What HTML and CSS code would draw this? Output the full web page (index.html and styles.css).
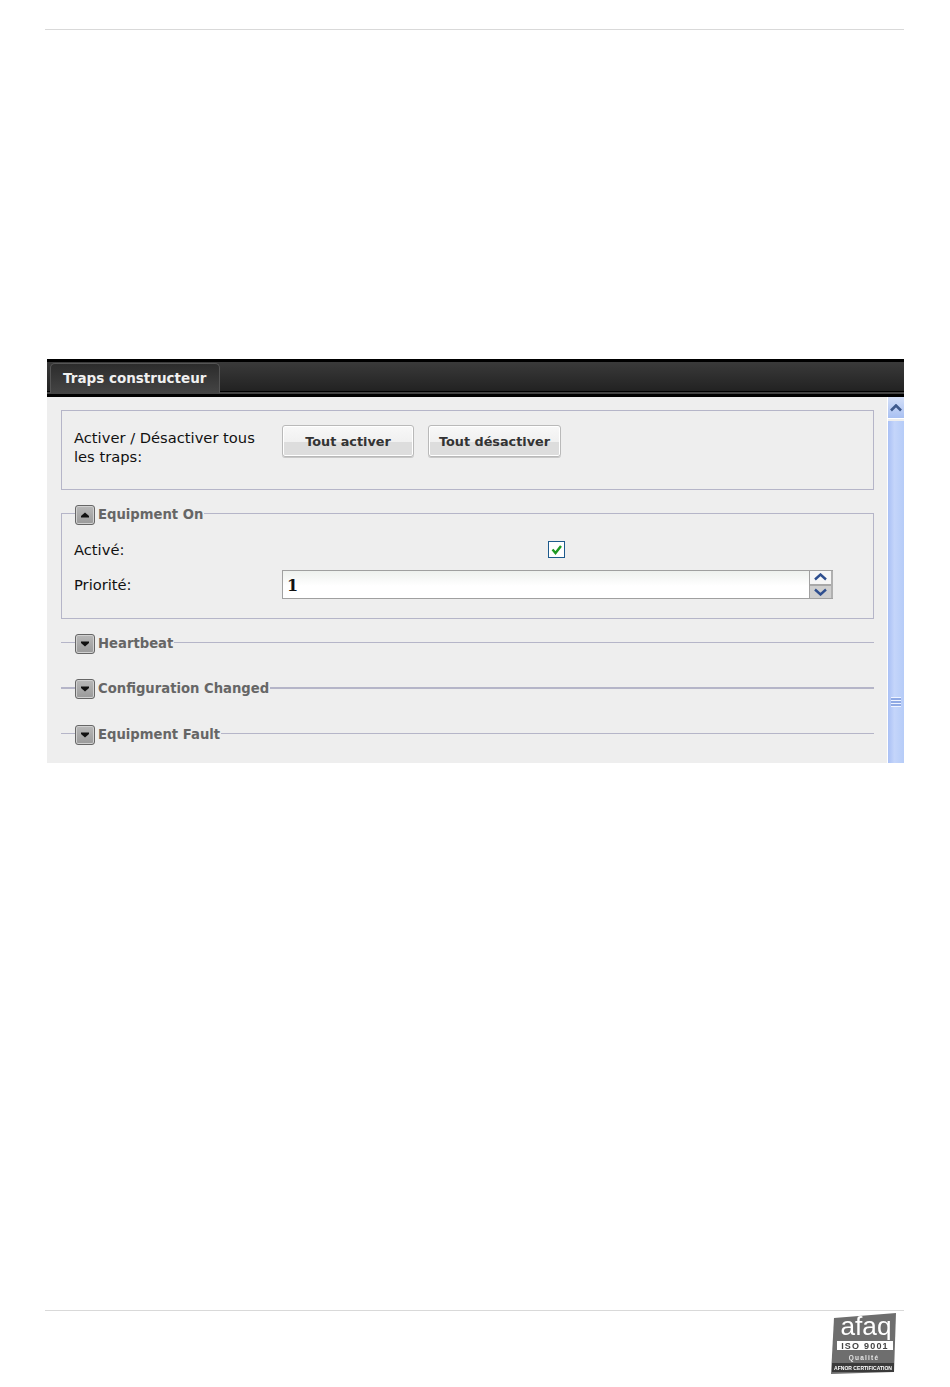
FILE: index.html
```html
<!DOCTYPE html>
<html lang="fr">
<head>
  <meta charset="UTF-8" />
  <title>Traps constructeur</title>
  <link rel="stylesheet" href="styles.css">
</head>
<body>
  <div class="rule rule-top"></div>

  <div class="panel">
    <!-- Tab bar -->
    <div class="tabbar">
      <div class="tab">Traps constructeur</div>
    </div>

    <div class="panel-body">
      <div class="content">
        <div class="box box-all">
          <div class="box-label">Activer / Désactiver tous les traps:</div>
          <button class="btn btn-on">Tout activer</button>
          <button class="btn btn-off">Tout désactiver</button>
        </div>

        <!-- Open section -->
        <fieldset class="section section-open">
          <legend>
            <span class="toggle"><svg width="10" height="6" viewBox="0 0 10 6"><path d="M5 0.5 L9 4 V5.5 H1 V4 Z" fill="#111"/></svg></span>
            <span class="legend-text">Equipment On</span>
          </legend>
          <div class="section-body">
            <div class="form-row">
              <span class="form-label">Activé:</span>
              <div class="form-check">
                <span class="checkbox"><svg width="13" height="13" viewBox="0 0 13 13"><path d="M2.5 6.5 L5.5 10 L11 3" fill="none" stroke="#1f9a23" stroke-width="2.4"/></svg></span>
              </div>
            </div>
            <div class="form-row">
              <span class="form-label">Priorité:</span>
              <div class="spinner">
                <div class="spinner-value">1</div>
                <div class="spinner-btns">
                  <span class="spin spin-up"><svg width="13" height="8" viewBox="0 0 13 8"><path d="M1 6.5 L6.5 1.5 L12 6.5" fill="none" stroke="#2f4f8f" stroke-width="2.4"/></svg></span>
                  <span class="spin spin-down"><svg width="13" height="8" viewBox="0 0 13 8"><path d="M1 1.5 L6.5 6.5 L12 1.5" fill="none" stroke="#2f4f8f" stroke-width="2.4"/></svg></span>
                </div>
              </div>
            </div>
          </div>
        </fieldset>

        <!-- Closed sections -->
        <fieldset class="section section-closed">
          <legend>
            <span class="toggle"><svg width="10" height="6" viewBox="0 0 10 6"><path d="M5 5.5 L9 2 V0.5 H1 V2 Z" fill="#111"/></svg></span>
            <span class="legend-text">Heartbeat</span>
          </legend>
        </fieldset>
        <fieldset class="section section-closed section-thick">
          <legend>
            <span class="toggle"><svg width="10" height="6" viewBox="0 0 10 6"><path d="M5 5.5 L9 2 V0.5 H1 V2 Z" fill="#111"/></svg></span>
            <span class="legend-text">Configuration Changed</span>
          </legend>
        </fieldset>
        <fieldset class="section section-closed section-last">
          <legend>
            <span class="toggle"><svg width="10" height="6" viewBox="0 0 10 6"><path d="M5 5.5 L9 2 V0.5 H1 V2 Z" fill="#111"/></svg></span>
            <span class="legend-text">Equipment Fault</span>
          </legend>
        </fieldset>
      </div>

      <!-- Scrollbar -->
      <div class="scrollbar">
        <div class="scroll-up"><svg width="12" height="8" viewBox="0 0 12 8"><path d="M1 6.5 L6 1.5 L11 6.5" fill="none" stroke="#3f5a8c" stroke-width="2.6"/></svg></div>
        <div class="scroll-thumb">
          <div class="scroll-grip"></div>
        </div>
      </div>
    </div>
  </div>

  <div class="rule rule-bottom"></div>

  <div class="footer">
    <svg class="logo" width="66" height="62" viewBox="0 0 66 62">
      <path d="M3 5 L65 0 L63 59 L0 61 Z" fill="#6e6e6e"/>
      <text x="35" y="22" class="logo-afaq" text-anchor="middle" textLength="51" lengthAdjust="spacingAndGlyphs">afaq</text>
      <rect x="6" y="28" width="56" height="9" fill="#fff"/>
      <text x="34" y="36" class="logo-iso" text-anchor="middle">ISO 9001</text>
      <text x="33" y="47" class="logo-q" text-anchor="middle">Qualité</text>
      <rect x="1" y="50" width="62" height="9" fill="#3a3a3a"/>
      <text x="32" y="56.5" class="logo-afnor" text-anchor="middle" textLength="58" lengthAdjust="spacingAndGlyphs">AFNOR CERTIFICATION</text>
    </svg>
  </div>
</body>
</html>
```

FILE: styles.css
```css
body {
  margin: 0;
  background-color: #ffffff;
  font-family: "DejaVu Sans", Verdana, sans-serif;
}

.rule {
  height: 1px;
  margin-left: 45px;
  width: 859px;
  background-color: #d9d9d9;
}

.rule-top {
  margin-top: 29px;
}

.rule-bottom {
  margin-top: 547px;
}

/* Panel */
.panel {
  margin-top: 329px;
  margin-left: 47px;
  width: 857px;
  height: 404px;
  display: flex;
  flex-direction: column;
  background-color: #eeeeee;
}

.tabbar {
  height: 38px;
  box-sizing: border-box;
  padding: 4px 0 0 3px;
  background: linear-gradient(#000 0, #000 3px, #3a3a3a 3px, #222222 32px, #000 32px, #000 33px, #444 33px, #444 35px, #000 35px);
}

.tab {
  width: 170px;
  height: 30px;
  box-sizing: border-box;
  padding: 6px 0 0 12px;
  border: 1px solid #555555;
  border-bottom: none;
  border-radius: 5px 5px 0 0;
  background: linear-gradient(#2c2c2c, #444444);
  color: #f0f0f0;
  font-size: 13.5px;
  font-weight: bold;
  white-space: nowrap;
}

.panel-body {
  flex: 1;
  display: flex;
  min-height: 0;
  overflow: hidden;
}

.content {
  flex: 1;
  padding: 13px 13px 0 14px;
}

/* Top box */
.box {
  height: 80px;
  box-sizing: border-box;
  border: 1px solid #b5b5c8;
  display: flex;
  align-items: flex-start;
  padding: 14px 0 0 12px;
}

.box-label {
  width: 190px;
  margin-right: 18px;
  padding-top: 3px;
  font-size: 14.7px;
  line-height: 19px;
  color: #111111;
}

.btn {
  height: 32px;
  padding: 0;
  border: 1px solid #b9b9b9;
  border-radius: 3px;
  background: linear-gradient(#f8f8f8 0, #f0f0f0 55%, #dddddd 55%, #dddddd 100%);
  box-shadow: inset 0 0 0 1px #ffffff, 0 1px 0 #c8c8c8;
  color: #333333;
  font-family: "DejaVu Sans", Verdana, sans-serif;
  font-size: 12.8px;
  font-weight: bold;
}

.btn-on {
  width: 132px;
}

.btn-off {
  width: 133px;
  margin-left: 14px;
}

/* Sections */
.section {
  margin: 0;
  padding: 0;
  min-width: 0;
  border: 1px solid #b5b5c8;
}

.section legend {
  margin-left: 13px;
  padding: 0;
  display: flex;
  align-items: flex-start;
  height: 17px;
}

.toggle {
  flex: none;
  width: 20px;
  height: 20px;
  box-sizing: border-box;
  display: flex;
  align-items: center;
  justify-content: center;
  border: 1px solid #666666;
  border-radius: 3px;
  background: linear-gradient(#b8b8b8, #9a9a9a);
  box-shadow: inset 0 0 0 1px #d0d0d0;
}

.legend-text {
  margin-left: 3px;
  margin-right: 1px;
  font-size: 13.2px;
  line-height: 20px;
  font-weight: bold;
  color: #666666;
}

.section-open {
  height: 114px;
  box-sizing: border-box;
  margin-top: 15px;
}

.section-body {
  padding: 19px 40px 0 12px;
}

.form-row {
  display: flex;
  align-items: center;
}

.form-row + .form-row {
  margin-top: 12px;
}

.form-label {
  width: 208px;
  font-size: 14.7px;
  color: #111111;
}

.form-check {
  flex: 1;
  display: flex;
  justify-content: center;
  padding-right: 2px;
}

.checkbox {
  width: 17px;
  height: 17px;
  box-sizing: border-box;
  display: flex;
  align-items: center;
  justify-content: center;
  border: 1px solid #1d5a8c;
  background-color: #ffffff;
}

.spinner {
  flex: 1;
  height: 29px;
  box-sizing: border-box;
  display: flex;
  border: 1px solid #a0a0a0;
  border-right: none;
  background: linear-gradient(#eef1ee, #ffffff 55%);
}

.spinner-value {
  flex: 1;
  padding: 5px 0 0 4px;
  font-family: "DejaVu Serif", serif;
  font-size: 16px;
  font-weight: bold;
  color: #111111;
}

.spinner-btns {
  width: 24px;
  box-sizing: border-box;
  display: flex;
  flex-direction: column;
  border-left: 1px solid #a0a0a0;
  border-right: 2px solid #b0b0b0;
}

.spin {
  flex: 1;
  display: flex;
  align-items: center;
  justify-content: center;
}

.spin-up {
  background-color: #f6f6f6;
  border-bottom: 2px solid #a8a8a8;
}

.spin-down {
  background-color: #cfcfcf;
}

.section-closed {
  border-width: 1px 0 0;
  margin-top: 15px;
}

.section-closed legend {
  margin-left: 14px;
}

.section-thick {
  border-top-width: 2px;
  margin-top: 28px;
}

.section-last {
  margin-top: 29px;
}

/* Scrollbar */
.scrollbar {
  width: 17px;
  display: flex;
  flex-direction: column;
  border-left: 1px solid #ffffff;
  box-sizing: border-box;
}

.scroll-up {
  flex: none;
  height: 21px;
  display: flex;
  align-items: center;
  justify-content: center;
  background: linear-gradient(#d4e0f8, #a9c0f2);
  border-bottom: 1px solid #ffffff;
}

.scroll-thumb {
  flex: none;
  margin-top: 2px;
  height: 562px;
  display: flex;
  align-items: center;
  justify-content: center;
  background: linear-gradient(90deg, #a9c0f5, #c4d5fa 40%, #b6ccf8);
}

.scroll-grip {
  width: 10px;
  height: 10px;
  background: repeating-linear-gradient(#eef3ff 0, #eef3ff 1px, #8fa9e4 1px, #8fa9e4 3px);
}

/* Footer logo */
.footer {
  display: flex;
  justify-content: flex-end;
  padding: 2px 53px 0 0;
}

.logo {
  filter: blur(0.35px);
}

.logo text {
  font-family: "Liberation Sans", Arial, sans-serif;
}

.logo .logo-afaq {
  font-size: 25px;
  fill: #ffffff;
}

.logo .logo-iso {
  font-size: 9px;
  font-weight: bold;
  letter-spacing: 1.2px;
  fill: #444444;
}

.logo .logo-q {
  font-size: 6.5px;
  font-weight: bold;
  letter-spacing: 1.2px;
  fill: #e6e6e6;
}

.logo .logo-afnor {
  font-size: 5px;
  font-weight: bold;
  fill: #ffffff;
}
```
